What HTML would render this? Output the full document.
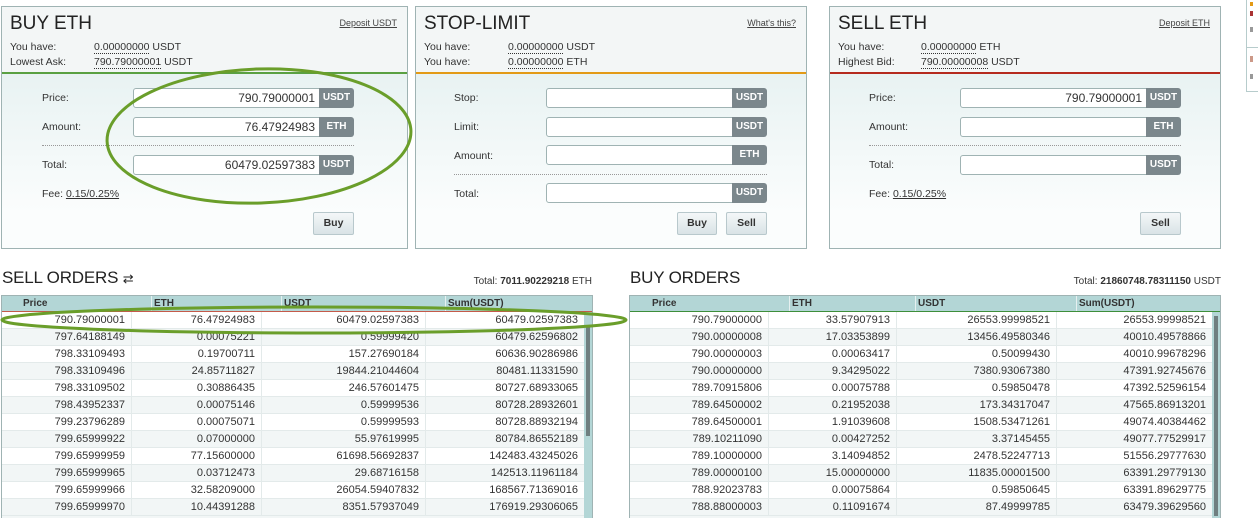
<!DOCTYPE html>
<html><head><meta charset="utf-8"><style>
*{box-sizing:border-box;margin:0;padding:0}
body{width:1258px;height:518px;overflow:hidden;background:#fff;font-family:"Liberation Sans",sans-serif;font-size:11px;color:#333;position:relative}
.p{position:absolute;top:6px;height:243px;border:1px solid #9fb3b3;background:linear-gradient(#dfeded,#fbfdfd 85%)}
.ph{position:absolute;left:0;right:0;top:0;height:67px;background:#f3f6f6;border-bottom:2px solid #5aa042}
.p h1{position:absolute;left:8px;top:6px;font-size:19px;font-weight:normal;color:#222;letter-spacing:0}
.dep{position:absolute;right:10px;top:11px;font-size:9px;text-decoration:underline;color:#444}
.a{position:absolute;font-size:10.5px;color:#333}
.u{border-bottom:1px dotted #333}
.lab{position:absolute;font-size:10.5px}
.in{position:absolute;height:20px;background:#fff;border:1px solid #9fb3b3;border-radius:3px 0 0 3px;text-align:right;padding:2px 4px 0 0;font-size:12px;color:#333}
.un{position:absolute;height:20px;background:#7b878c;color:#fff;border-radius:0 3px 3px 0;font-weight:bold;font-size:10px;text-align:center;line-height:20px}
.dot{position:absolute;height:0;border-top:1px dotted #999}
.btn{position:absolute;height:23px;border:1px solid #b8c8cc;border-radius:2px;background:linear-gradient(#f4f7f8,#d9e3e6);font-weight:bold;font-size:10.5px;text-align:center;line-height:21px;color:#333}
.fee{position:absolute;font-size:10.5px}
.fee span{text-decoration:underline}
.t{position:absolute;font-size:17px;color:#222;letter-spacing:-.2px}
.tot{position:absolute;font-size:10px;text-align:right}
.tbl{position:absolute;top:295px;width:592px;height:223px;border:1px solid #9fb3b3;border-bottom:0;overflow:hidden}
.hd{position:absolute;left:0;right:0;top:0;height:16px;background:#b3d6d6;font-weight:bold;font-size:10px;border-bottom:1px solid #c45a4a}
.hd div{position:absolute;top:0;height:15px;line-height:15px;border-left:1px solid #e6f0f0;padding-left:2px}
.r{position:absolute;left:0;height:17px;width:583px;font-size:11px}
.r:nth-child(odd){background:#fff}
.r div{position:absolute;top:0;height:17px;line-height:17px;text-align:right;border-right:1px solid #e3eaea;border-bottom:1px solid #e3eaea;padding-right:6px}
.sb{position:absolute;top:16px;right:0;width:8px;bottom:0;background:#b3d6d6}
.sb i{position:absolute;left:2px;top:14px;width:4px;height:110px;background:#6f7f80}
</style></head><body>

<!-- BUY ETH -->
<div class="p" style="left:1px;width:407px">
 <div class="ph"><h1>BUY ETH</h1><div class="dep">Deposit USDT</div>
  <div class="a" style="left:8px;top:34px">You have:</div><div class="a" style="left:92px;top:34px"><span class="u">0.00000000</span> USDT</div>
  <div class="a" style="left:8px;top:49px">Lowest Ask:</div><div class="a" style="left:92px;top:49px"><span class="u">790.79000001</span> USDT</div>
 </div>
 <div class="lab" style="left:40px;top:85px">Price:</div><div class="in" style="left:131px;top:81px;width:187px">790.79000001</div><div class="un" style="left:317px;top:81px;width:35px">USDT</div>
 <div class="lab" style="left:40px;top:114px">Amount:</div><div class="in" style="left:131px;top:110px;width:187px">76.47924983</div><div class="un" style="left:317px;top:110px;width:35px">ETH</div>
 <div class="dot" style="left:40px;top:138px;width:312px"></div>
 <div class="lab" style="left:40px;top:152px">Total:</div><div class="in" style="left:131px;top:148px;width:187px">60479.02597383</div><div class="un" style="left:317px;top:148px;width:35px">USDT</div>
 <div class="fee" style="left:40px;top:181px">Fee: <span>0.15/0.25%</span></div>
 <div class="btn" style="left:311px;top:205px;width:41px">Buy</div>
</div>

<!-- STOP-LIMIT -->
<div class="p" style="left:415px;width:392px">
 <div class="ph" style="border-bottom-color:#e39a16"><h1>STOP-LIMIT</h1><div class="dep">What's this?</div>
  <div class="a" style="left:8px;top:34px">You have:</div><div class="a" style="left:92px;top:34px"><span class="u">0.00000000</span> USDT</div>
  <div class="a" style="left:8px;top:49px">You have:</div><div class="a" style="left:92px;top:49px"><span class="u">0.00000000</span> ETH</div>
 </div>
 <div class="lab" style="left:38px;top:85px">Stop:</div><div class="in" style="left:130px;top:81px;width:187px"></div><div class="un" style="left:316px;top:81px;width:35px">USDT</div>
 <div class="lab" style="left:38px;top:114px">Limit:</div><div class="in" style="left:130px;top:110px;width:187px"></div><div class="un" style="left:316px;top:110px;width:35px">USDT</div>
 <div class="lab" style="left:38px;top:143px">Amount:</div><div class="in" style="left:130px;top:138px;width:187px"></div><div class="un" style="left:316px;top:138px;width:35px">ETH</div>
 <div class="dot" style="left:38px;top:167px;width:313px"></div>
 <div class="lab" style="left:38px;top:181px">Total:</div><div class="in" style="left:130px;top:176px;width:187px"></div><div class="un" style="left:316px;top:176px;width:35px">USDT</div>
 <div class="btn" style="left:261px;top:205px;width:40px">Buy</div>
 <div class="btn" style="left:310px;top:205px;width:41px">Sell</div>
</div>

<!-- SELL ETH -->
<div class="p" style="left:829px;width:392px">
 <div class="ph" style="border-bottom-color:#b52a1e"><h1>SELL ETH</h1><div class="dep">Deposit ETH</div>
  <div class="a" style="left:8px;top:34px">You have:</div><div class="a" style="left:91px;top:34px"><span class="u">0.00000000</span> ETH</div>
  <div class="a" style="left:8px;top:49px">Highest Bid:</div><div class="a" style="left:91px;top:49px"><span class="u">790.00000008</span> USDT</div>
 </div>
 <div class="lab" style="left:39px;top:85px">Price:</div><div class="in" style="left:130px;top:81px;width:187px">790.79000001</div><div class="un" style="left:316px;top:81px;width:35px">USDT</div>
 <div class="lab" style="left:39px;top:114px">Amount:</div><div class="in" style="left:130px;top:110px;width:187px"></div><div class="un" style="left:316px;top:110px;width:35px">ETH</div>
 <div class="dot" style="left:39px;top:138px;width:312px"></div>
 <div class="lab" style="left:39px;top:152px">Total:</div><div class="in" style="left:130px;top:148px;width:187px"></div><div class="un" style="left:316px;top:148px;width:35px">USDT</div>
 <div class="fee" style="left:39px;top:181px">Fee: <span>0.15/0.25%</span></div>
 <div class="btn" style="left:310px;top:205px;width:41px">Sell</div>
</div>

<!-- right edge partial -->
<div style="position:absolute;left:1246px;top:-1px;width:20px;height:93px;border:1px solid #b7cccc;background:#fff">
 <div style="position:absolute;left:0;right:0;top:47px;border-top:1px solid #b7cccc"></div>
 <div style="position:absolute;left:3px;top:2px;width:3px;height:4px;background:#e39a16"></div>
 <div style="position:absolute;left:3px;top:11px;width:3px;height:5px;background:#a33"></div>
 <div style="position:absolute;left:3px;top:27px;width:3px;height:5px;background:#999"></div>
 <div style="position:absolute;left:3px;top:56px;width:3px;height:6px;background:#c98"></div>
 <div style="position:absolute;left:3px;top:74px;width:3px;height:5px;background:#999"></div>
</div>

<div class="t" style="left:2px;top:268px">SELL ORDERS <span style="font-size:13px">&#8644;</span></div>
<div class="tot" style="left:400px;width:192px;top:276px">Total: <b>7011.90229218</b> ETH</div>
<div class="t" style="left:630px;top:268px">BUY ORDERS</div>
<div class="tot" style="left:1000px;width:221px;top:276px">Total: <b>21860748.78311150</b> USDT</div>

<div class="tbl" style="left:1px;background:#f2f6f6">
 <div class="hd"><div style="left:0;width:149px;border:0;padding-left:21px">Price</div><div style="left:149px;width:130px">ETH</div><div style="left:279px;width:164px">USDT</div><div style="left:443px;width:148px">Sum(USDT)</div></div>
 <div style="position:absolute;top:16px;left:0;right:0;bottom:0">
 <div class="r" style="top:0;background:#fff"><div style="left:0;width:130px">790.79000001</div><div style="left:130px;width:130px">76.47924983</div><div style="left:260px;width:164px">60479.02597383</div><div style="left:424px;width:159px">60479.02597383</div></div>
 <div class="r" style="top:17px"><div style="left:0;width:130px">797.64188149</div><div style="left:130px;width:130px">0.00075221</div><div style="left:260px;width:164px">0.59999420</div><div style="left:424px;width:159px">60479.62596802</div></div>
 <div class="r" style="top:34px;background:#fff"><div style="left:0;width:130px">798.33109493</div><div style="left:130px;width:130px">0.19700711</div><div style="left:260px;width:164px">157.27690184</div><div style="left:424px;width:159px">60636.90286986</div></div>
 <div class="r" style="top:51px"><div style="left:0;width:130px">798.33109496</div><div style="left:130px;width:130px">24.85711827</div><div style="left:260px;width:164px">19844.21044604</div><div style="left:424px;width:159px">80481.11331590</div></div>
 <div class="r" style="top:68px;background:#fff"><div style="left:0;width:130px">798.33109502</div><div style="left:130px;width:130px">0.30886435</div><div style="left:260px;width:164px">246.57601475</div><div style="left:424px;width:159px">80727.68933065</div></div>
 <div class="r" style="top:85px"><div style="left:0;width:130px">798.43952337</div><div style="left:130px;width:130px">0.00075146</div><div style="left:260px;width:164px">0.59999536</div><div style="left:424px;width:159px">80728.28932601</div></div>
 <div class="r" style="top:102px;background:#fff"><div style="left:0;width:130px">799.23796289</div><div style="left:130px;width:130px">0.00075071</div><div style="left:260px;width:164px">0.59999593</div><div style="left:424px;width:159px">80728.88932194</div></div>
 <div class="r" style="top:119px"><div style="left:0;width:130px">799.65999922</div><div style="left:130px;width:130px">0.07000000</div><div style="left:260px;width:164px">55.97619995</div><div style="left:424px;width:159px">80784.86552189</div></div>
 <div class="r" style="top:136px;background:#fff"><div style="left:0;width:130px">799.65999959</div><div style="left:130px;width:130px">77.15600000</div><div style="left:260px;width:164px">61698.56692837</div><div style="left:424px;width:159px">142483.43245026</div></div>
 <div class="r" style="top:153px"><div style="left:0;width:130px">799.65999965</div><div style="left:130px;width:130px">0.03712473</div><div style="left:260px;width:164px">29.68716158</div><div style="left:424px;width:159px">142513.11961184</div></div>
 <div class="r" style="top:170px;background:#fff"><div style="left:0;width:130px">799.65999966</div><div style="left:130px;width:130px">32.58209000</div><div style="left:260px;width:164px">26054.59407832</div><div style="left:424px;width:159px">168567.71369016</div></div>
 <div class="r" style="top:187px"><div style="left:0;width:130px">799.65999970</div><div style="left:130px;width:130px">10.44391288</div><div style="left:260px;width:164px">8351.57937049</div><div style="left:424px;width:159px">176919.29306065</div></div>
 </div>
 <div class="sb"><i></i></div>
</div>

<div class="tbl" style="left:629px;background:#f2f6f6">
 <div class="hd" style="border-bottom-color:#3e8e3a"><div style="left:0;width:159px;border:0;padding-left:22px">Price</div><div style="left:159px;width:126px">ETH</div><div style="left:285px;width:161px">USDT</div><div style="left:446px;width:146px">Sum(USDT)</div></div>
 <div style="position:absolute;top:16px;left:0;right:0;bottom:0">
 <div class="r" style="top:0;background:#fff"><div style="left:0;width:139px">790.79000000</div><div style="left:139px;width:128px">33.57907913</div><div style="left:267px;width:160px">26553.99998521</div><div style="left:427px;width:156px">26553.99998521</div></div>
 <div class="r" style="top:17px"><div style="left:0;width:139px">790.00000008</div><div style="left:139px;width:128px">17.03353899</div><div style="left:267px;width:160px">13456.49580346</div><div style="left:427px;width:156px">40010.49578866</div></div>
 <div class="r" style="top:34px;background:#fff"><div style="left:0;width:139px">790.00000003</div><div style="left:139px;width:128px">0.00063417</div><div style="left:267px;width:160px">0.50099430</div><div style="left:427px;width:156px">40010.99678296</div></div>
 <div class="r" style="top:51px"><div style="left:0;width:139px">790.00000000</div><div style="left:139px;width:128px">9.34295022</div><div style="left:267px;width:160px">7380.93067380</div><div style="left:427px;width:156px">47391.92745676</div></div>
 <div class="r" style="top:68px;background:#fff"><div style="left:0;width:139px">789.70915806</div><div style="left:139px;width:128px">0.00075788</div><div style="left:267px;width:160px">0.59850478</div><div style="left:427px;width:156px">47392.52596154</div></div>
 <div class="r" style="top:85px"><div style="left:0;width:139px">789.64500002</div><div style="left:139px;width:128px">0.21952038</div><div style="left:267px;width:160px">173.34317047</div><div style="left:427px;width:156px">47565.86913201</div></div>
 <div class="r" style="top:102px;background:#fff"><div style="left:0;width:139px">789.64500001</div><div style="left:139px;width:128px">1.91039608</div><div style="left:267px;width:160px">1508.53471261</div><div style="left:427px;width:156px">49074.40384462</div></div>
 <div class="r" style="top:119px"><div style="left:0;width:139px">789.10211090</div><div style="left:139px;width:128px">0.00427252</div><div style="left:267px;width:160px">3.37145455</div><div style="left:427px;width:156px">49077.77529917</div></div>
 <div class="r" style="top:136px;background:#fff"><div style="left:0;width:139px">789.10000000</div><div style="left:139px;width:128px">3.14094852</div><div style="left:267px;width:160px">2478.52247713</div><div style="left:427px;width:156px">51556.29777630</div></div>
 <div class="r" style="top:153px"><div style="left:0;width:139px">789.00000100</div><div style="left:139px;width:128px">15.00000000</div><div style="left:267px;width:160px">11835.00001500</div><div style="left:427px;width:156px">63391.29779130</div></div>
 <div class="r" style="top:170px;background:#fff"><div style="left:0;width:139px">788.92023783</div><div style="left:139px;width:128px">0.00075864</div><div style="left:267px;width:160px">0.59850645</div><div style="left:427px;width:156px">63391.89629775</div></div>
 <div class="r" style="top:187px"><div style="left:0;width:139px">788.88000003</div><div style="left:139px;width:128px">0.11091674</div><div style="left:267px;width:160px">87.49999785</div><div style="left:427px;width:156px">63479.39629560</div></div>
 </div>
 <div class="sb"><i style="top:4px;height:200px"></i></div>
</div>

<svg style="position:absolute;left:0;top:0" width="1258" height="518">
 <ellipse cx="259" cy="136" rx="152" ry="67" fill="none" stroke="#6a9e2a" stroke-width="3" transform="rotate(-2 259 136)"/>
 <ellipse cx="314" cy="320" rx="312" ry="13" fill="none" stroke="#6a9e2a" stroke-width="3"/>
</svg>
</body></html>
